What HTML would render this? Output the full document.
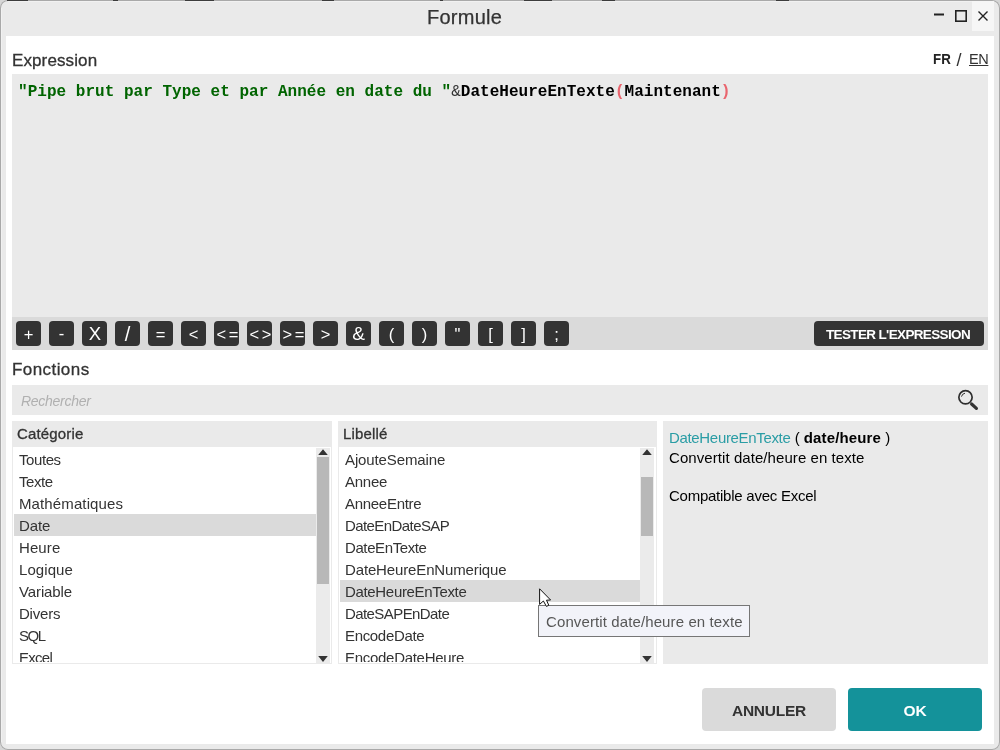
<!DOCTYPE html>
<html>
<head>
<meta charset="utf-8">
<title>Formule</title>
<style>
*{box-sizing:border-box;margin:0;padding:0}
html,body{width:1000px;height:750px;overflow:hidden;background:#d6d6d6;font-family:"Liberation Sans",sans-serif;color:#333}
.abs{position:absolute}
#win{position:absolute;left:0;top:0;width:1000px;height:750px;background:#eaeaea;border-radius:8px;overflow:hidden;box-shadow:inset 0 0 0 1px #a9a9a9}
#content{position:absolute;left:6px;top:36px;width:988px;height:708px;background:#fff}
#title{position:absolute;left:427px;top:4px;height:26px;line-height:26px;font-size:20px;letter-spacing:.25px;-webkit-text-stroke:.25px #333;color:#333;white-space:nowrap}
#closebg{position:absolute;left:972px;top:1px;width:22px;height:30px;background:#f6f6f6}
.lbl{position:absolute;font-size:17px;line-height:20px;color:#333;white-space:nowrap;-webkit-text-stroke:.3px #333}
#editor{position:absolute;left:12px;top:74px;width:976px;height:243px;background:#eaeaea}
#code{position:absolute;left:18px;top:82px;letter-spacing:.025px;font-family:"Liberation Mono",monospace;font-weight:bold;font-size:16px;line-height:20px;white-space:pre;color:#000}
#code .s{color:#006400}
#code .a{font-weight:normal;color:#333}
#code .p{color:#e9656e}
#toolbar{position:absolute;left:12px;top:317px;width:976px;height:33px;background:#dadada}
.tb{position:absolute;top:321px;width:25px;height:25px;background:#333;border-radius:4px;color:#fff;font-size:16.5px;line-height:26px;text-align:center;white-space:nowrap}
#tester{position:absolute;left:814px;top:321px;width:170px;height:25px;background:#333;border-radius:4px;color:#fff;font-weight:bold;font-size:13.5px;letter-spacing:-.64px;line-height:27px;text-align:center;padding-right:2px;white-space:nowrap}
#search{position:absolute;left:12px;top:385px;width:976px;height:30px;background:#eaeaea}
#ph{position:absolute;left:21px;top:391px;font-style:italic;font-size:14px;letter-spacing:-.27px;line-height:20px;color:#b0b0b0;white-space:nowrap}
.hdr{position:absolute;top:421px;height:26px;background:#eaeaea;font-size:15px;line-height:25px;padding-left:5px;color:#333;-webkit-text-stroke:.3px #333;letter-spacing:.15px}
.list{position:absolute;top:447px;height:217px;background:#fff;border:1px solid #eaeaea;border-top:none;overflow:hidden}
.row{position:absolute;left:1px;height:22px;line-height:24px;font-size:15px;padding-left:5px;color:#333;white-space:nowrap}
.row.sel{background:#dadada}
.list:after{content:"";position:absolute;left:0;right:16px;top:215px;height:1px;background:#fff}
.sb{position:absolute;top:1px;width:14px;height:215px;background:#ebebeb}
.thumb{position:absolute;left:1px;width:12px;background:#b8b8b8}
#desc{position:absolute;left:663px;top:421px;width:325px;height:243px;background:#eaeaea;font-size:15px;color:#000}
#desc div{position:absolute;left:6px;white-space:nowrap;line-height:20px}
#tip{position:absolute;left:538px;top:605px;width:212px;height:32px;letter-spacing:.11px;background:#f2f3f9;border:1px solid #767676;font-size:15px;line-height:31px;padding-left:7px;color:#575757;white-space:nowrap}
.btn{position:absolute;top:688px;width:134px;height:43px;border-radius:4px;font-weight:bold;font-size:15.5px;line-height:46px;text-align:center}
</style>
</head>
<body><div id="root" style="position:absolute;left:0;top:0;width:1000px;height:750px;will-change:transform">
<div id="win">
<div id="content"></div>
<i style="position:absolute;left:8px;top:1px;width:984px;height:1px;background:#f1f1f1"></i><i style="position:absolute;left:1px;top:8px;width:1px;height:734px;background:#f1f1f1"></i>
</div>
<i style="position:absolute;top:0;height:1px;left:7px;width:21px;background:#3c3c3c"></i><i style="position:absolute;top:0;height:1px;left:113px;width:5px;background:#3c3c3c"></i><i style="position:absolute;top:0;height:1px;left:185px;width:29px;background:#3c3c3c"></i><i style="position:absolute;top:0;height:1px;left:322px;width:12px;background:#3c3c3c"></i><i style="position:absolute;top:0;height:1px;left:440px;width:3px;background:#3c3c3c"></i><i style="position:absolute;top:0;height:1px;left:524px;width:28px;background:#3c3c3c"></i><i style="position:absolute;top:0;height:1px;left:602px;width:13px;background:#3c3c3c"></i><i style="position:absolute;top:0;height:1px;left:776px;width:13px;background:#3c3c3c"></i>
<div id="closebg"></div>
<div id="title">Formule</div>
<svg class="abs" style="left:930px;top:6px" width="64" height="20" viewBox="930 6 64 20">
<rect x="934" y="13.5" width="10" height="2" fill="#222"/>
<rect x="955.8" y="10.8" width="10.4" height="10.4" fill="none" stroke="#222" stroke-width="1.6"/>
<path d="M978.5 11.5 L987.5 20.5 M987.5 11.5 L978.5 20.5" stroke="#222" stroke-width="1.4" fill="none"/>
</svg>

<div class="lbl" style="left:12px;top:51px;letter-spacing:.11px">Expression</div>
<div class="abs" style="left:933px;top:49px;font-size:14.5px;line-height:20px;color:#333;white-space:nowrap"><b style="color:#222;display:inline-block;transform:scaleX(.92);transform-origin:0 50%">FR</b><span style="position:absolute;left:23.5px;top:1px;font-size:18px">/</span><span style="position:absolute;left:36px;top:0;text-decoration:underline;letter-spacing:-.4px">EN</span></div>

<div id="editor"></div>
<div id="code"><span class="s">"Pipe brut par Type et par Année en date du "</span><span class="a">&amp;</span>DateHeureEnTexte<span class="p">(</span>Maintenant<span class="p">)</span></div>

<div id="toolbar"></div>
<div class="tb" style="left:16px">+</div>
<div class="tb" style="left:49px;line-height:24px">-</div>
<div class="tb" style="left:82px;font-size:18.5px;line-height:25px;text-indent:1px">X</div>
<div class="tb" style="left:115px;font-size:20px;line-height:27px">/</div>
<div class="tb" style="left:148px">=</div>
<div class="tb" style="left:181px">&lt;</div>
<div class="tb" style="left:214px;letter-spacing:2.5px;text-indent:2.5px">&lt;=</div>
<div class="tb" style="left:247px;letter-spacing:2.5px;text-indent:2.5px">&lt;&gt;</div>
<div class="tb" style="left:280px;letter-spacing:2.5px;text-indent:2.5px">&gt;=</div>
<div class="tb" style="left:313px">&gt;</div>
<div class="tb" style="left:346px;font-size:19px;line-height:26px">&amp;</div>
<div class="tb" style="left:379px">(</div>
<div class="tb" style="left:412px">)</div>
<div class="tb" style="left:445px">"</div>
<div class="tb" style="left:478px">[</div>
<div class="tb" style="left:511px">]</div>
<div class="tb" style="left:544px">;</div>
<div id="tester">TESTER L'EXPRESSION</div>

<div class="lbl" style="left:12px;top:360px;letter-spacing:.43px">Fonctions</div>
<div id="search"></div>
<div id="ph">Rechercher</div>
<svg class="abs" style="left:954px;top:386px" width="28" height="28" viewBox="954 386 28 28">
<circle cx="965.5" cy="397.3" r="6.65" fill="none" stroke="#2e2e2e" stroke-width="1.7"/>
<path d="M961.5 396.6 A4.4 4.4 0 0 1 965 393.2" fill="none" stroke="#2e2e2e" stroke-width="1"/>
<path d="M971.6 404 L976.4 408.4" stroke="#333" stroke-width="3.2" stroke-linecap="round"/>
</svg>

<div class="hdr" style="left:12px;width:320px">Catégorie</div>
<div class="list" style="left:12px;width:320px">
<div class="row" style="top:1px;width:302px;letter-spacing:-0.42px">Toutes</div>
<div class="row" style="top:23px;width:302px;letter-spacing:-0.43px">Texte</div>
<div class="row" style="top:45px;width:302px;letter-spacing:0.12px">Mathématiques</div>
<div class="row sel" style="top:67px;width:302px;letter-spacing:-0.13px">Date</div>
<div class="row" style="top:89px;width:302px;letter-spacing:0.10px">Heure</div>
<div class="row" style="top:111px;width:302px;letter-spacing:0.08px">Logique</div>
<div class="row" style="top:133px;width:302px;letter-spacing:-0.11px">Variable</div>
<div class="row" style="top:155px;width:302px;letter-spacing:-0.22px">Divers</div>
<div class="row" style="top:177px;width:302px;letter-spacing:-1.40px">SQL</div>
<div class="row" style="top:199px;width:302px;letter-spacing:-0.72px">Excel</div>
<div class="sb" style="left:303px"><div class="thumb" style="top:9px;height:127px"></div>
<svg class="abs" style="left:0;top:0" width="14" height="215"><path d="M2.2 7 L7 1.2 L11.8 7 Z M2.2 208 L11.8 208 L7 214 Z" fill="#333"/></svg></div>
</div>

<div class="hdr" style="left:338px;width:319px">Libellé</div>
<div class="list" style="left:338px;width:319px">
<div class="row" style="top:1px;width:300px;letter-spacing:-0.12px">AjouteSemaine</div>
<div class="row" style="top:23px;width:300px;letter-spacing:-0.25px">Annee</div>
<div class="row" style="top:45px;width:300px;letter-spacing:-0.29px">AnneeEntre</div>
<div class="row" style="top:67px;width:300px;letter-spacing:-0.58px">DateEnDateSAP</div>
<div class="row" style="top:89px;width:300px;letter-spacing:-0.40px">DateEnTexte</div>
<div class="row" style="top:111px;width:300px;letter-spacing:-0.14px">DateHeureEnNumerique</div>
<div class="row sel" style="top:133px;width:300px;letter-spacing:-0.33px">DateHeureEnTexte</div>
<div class="row" style="top:155px;width:300px;letter-spacing:-0.58px">DateSAPEnDate</div>
<div class="row" style="top:177px;width:300px;letter-spacing:-0.33px">EncodeDate</div>
<div class="row" style="top:199px;width:300px;letter-spacing:-0.29px">EncodeDateHeure</div>
<div class="sb" style="left:301px"><div class="thumb" style="top:29px;height:59px"></div>
<svg class="abs" style="left:0;top:0" width="14" height="215"><path d="M2.2 7 L7 1.2 L11.8 7 Z M2.2 208 L11.8 208 L7 214 Z" fill="#333"/></svg></div>
</div>

<div id="desc">
<div style="top:7px"><span style="color:#2a9da5;letter-spacing:-.33px">DateHeureEnTexte</span> ( <b style="letter-spacing:.14px">date/heure</b> )</div>
<div style="top:27px;letter-spacing:.07px">Convertit date/heure en texte</div>
<div style="top:65px;letter-spacing:-.25px">Compatible avec Excel</div>
</div>

<div id="tip">Convertit date/heure en texte</div>
<svg class="abs" style="left:536px;top:585px" width="20" height="26" viewBox="536 585 20 26">
<path d="M539.6 588.8 L539.6 604.4 L543.4 601 L546.4 606.4 L548.8 605.3 L546.5 600.2 L550.6 600 Z" fill="#fff" stroke="#111" stroke-width="1" stroke-linejoin="miter"/>
</svg>

<div class="btn" style="left:702px;background:#dadada;color:#333;letter-spacing:-.25px">ANNULER</div>
<div class="btn" style="left:848px;background:#14929a;color:#fff">OK</div>
</div></body>
</html>
